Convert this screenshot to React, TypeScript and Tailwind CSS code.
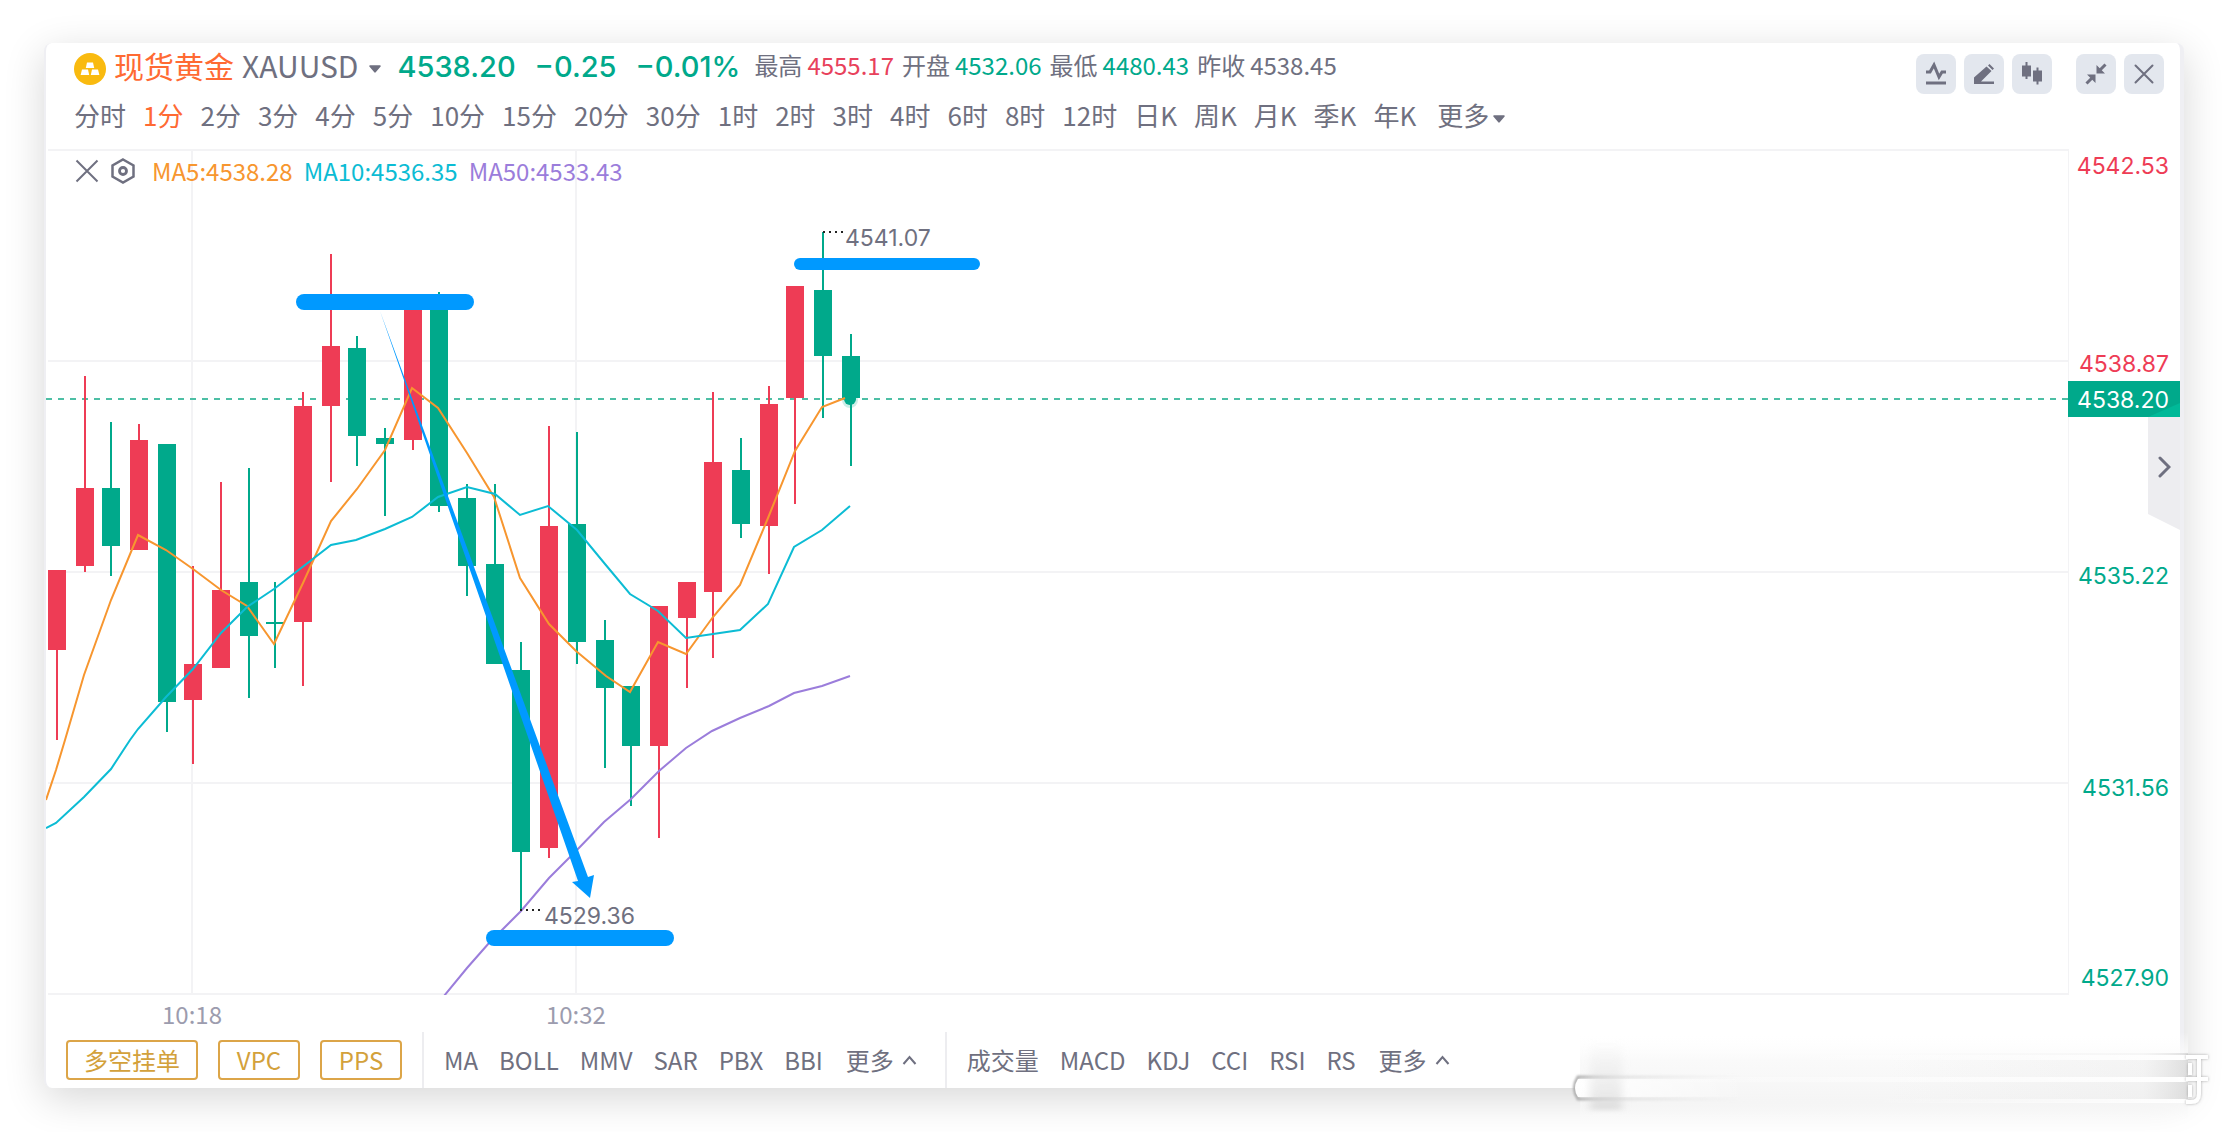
import type { ReactNode } from 'react'

const UP = '#ee3c55'
const DOWN = '#00a98b'

const periods = [
  '分时', '1分', '2分', '3分', '4分', '5分', '10分', '15分', '20分', '30分', '1时', '2时', '3时',
  '4时', '6时', '8时', '12时', '日K', '周K', '月K', '季K', '年K',
]

const stats = [
  { label: '最高', value: '4555.17', color: 'text-[#e8415b]' },
  { label: '开盘', value: '4532.06', color: 'text-[#00a98b]' },
  { label: '最低', value: '4480.43', color: 'text-[#00a98b]' },
  { label: '昨收', value: '4538.45', color: 'text-[#6f7080]' },
]

const orders = ['多空挂单', 'VPC', 'PPS']
const mainIndicators = ['MA', 'BOLL', 'MMV', 'SAR', 'PBX', 'BBI']
const subIndicators = ['成交量', 'MACD', 'KDJ', 'CCI', 'RSI', 'RS']

// x, body top, body bottom, wick top, wick bottom, rising
const candles: [number, number, number, number, number, boolean][] = [
  [2, 421, 501, 421, 591, true],
  [30, 339, 417, 227, 423, true],
  [56, 339, 397, 273, 427, false],
  [84, 291, 401, 275, 401, true],
  [112, 295, 553, 295, 583, false],
  [138, 515, 551, 417, 615, true],
  [166, 441, 519, 333, 519, true],
  [194, 433, 487, 319, 549, false],
  [220, 473, 475, 433, 519, false],
  [248, 257, 473, 243, 537, true],
  [276, 197, 257, 105, 333, true],
  [302, 199, 287, 187, 317, false],
  [330, 289, 295, 279, 367, false],
  [358, 155, 291, 155, 301, true],
  [384, 149, 357, 143, 363, false],
  [412, 349, 417, 335, 447, false],
  [440, 415, 515, 335, 515, false],
  [466, 521, 703, 493, 761, false],
  [494, 377, 699, 277, 709, true],
  [522, 375, 493, 283, 515, false],
  [550, 491, 539, 471, 619, false],
  [576, 537, 597, 537, 657, false],
  [604, 457, 597, 457, 689, true],
  [632, 433, 469, 433, 539, true],
  [658, 313, 443, 243, 509, true],
  [686, 321, 375, 289, 389, false],
  [714, 255, 377, 237, 425, true],
  [740, 137, 249, 137, 355, true],
  [768, 141, 207, 83, 269, false],
  [796, 207, 249, 185, 317, false],
]

const ma5 =
  '0,651 10,621 19,591 38,526 65,451 92,386 120,401 147,420 175,441 201,457 228,495 257,434 285,372 311,340 339,301 366,239 392,259 421,304 448,348 474,429 503,475 530,502 560,527 584,543 612,493 640,505 667,468 694,436 722,369 749,302 776,258 799,249'
const ma10 =
  '0,679 10,674 38,648 65,620 84,591 92,580 120,548 147,520 175,484 201,458 228,440 285,396 310,391 339,380 366,368 392,348 421,338 449,345 474,366 502,357 531,381 559,415 584,445 612,462 640,489 667,485 694,481 722,455 748,398 776,381 804,357'
const ma50 =
  '398,847 421,819 443,794 475,762 503,729 530,702 558,673 585,650 613,622 640,599 666,582 694,569 723,557 748,544 776,537 804,527'

const priceTicks = [
  { value: '4542.53', y: 25, color: UP },
  { value: '4538.87', y: 223, color: UP },
  { value: '4535.22', y: 435, color: DOWN },
  { value: '4531.56', y: 647, color: DOWN },
  { value: '4527.90', y: 837, color: DOWN },
]

function Caret() {
  return (
    <svg width="12" height="8" viewBox="0 0 13 8" fill="currentColor" aria-hidden="true">
      <path d="M1 0h11a.8.8 0 0 1 .6 1.300L7.300 7.500a1 1 0 0 1-1.600 0L.4 1.300A.8.8 0 0 1 1 0z" />
    </svg>
  )
}

function ToolButton({ label, children }: { label: string; children: ReactNode }) {
  return (
    <button
      type="button"
      aria-label={label}
      className="flex size-10 items-center justify-center rounded-lg bg-[#e3e7ee] text-[#6f7080]"
    >
      <svg width="40" height="40" viewBox="0 0 40 40" fill="none" stroke="currentColor">
        {children}
      </svg>
    </button>
  )
}

function Header() {
  return (
    <header className="flex h-[106px] items-start justify-between pr-4 pl-7">
      <div>
        <div className="flex h-12 items-center pb-1 whitespace-nowrap">
          <svg width="32" height="32" viewBox="0 0 32 32" className="mt-2 mr-2 shrink-0" aria-hidden="true">
            <circle cx="16" cy="16" r="16" fill="#f9ba0f" />
            <g fill="#fff">
              <path d="M13 9.5h6l1.200 5.500h-8.400z" />
              <path d="M8 16.500h6l1.200 5.500H6.600z" />
              <path d="M18 16.500h6l1.400 5.500h-8.600z" />
            </g>
          </svg>
          <h1 className="text-[30px] text-[#ff6a33]">现货黄金</h1>
          <button type="button" className="ml-2 flex items-center gap-[11px] text-[30px]">
            XAUUSD
            <span className="mt-2">
              <Caret />
            </span>
          </button>
          <div className="mt-1 ml-4 flex gap-[19px] font-['Inter','Liberation_Sans',sans-serif] text-[29px] font-medium text-[#00a98b]">
            <span>4538.20</span>
            <span>−0.25</span>
            <span>−0.01%</span>
          </div>
          <dl className="ml-[14px] flex gap-2">
            {stats.map((s) => (
              <div key={s.label} className="flex gap-[5px]">
                <dt>{s.label}</dt>
                <dd className={s.color}>{s.value}</dd>
              </div>
            ))}
          </dl>
        </div>
        <nav className="flex h-12 items-center gap-[17px] text-[26px] whitespace-nowrap">
          {periods.map((p) => (
            <button key={p} type="button" className={p === '1分' ? 'text-[#ff6a33]' : ''}>
              {p}
            </button>
          ))}
          <button type="button" className="ml-1 flex items-center gap-1">
            更多
            <span className="mt-2">
              <Caret />
            </span>
          </button>
        </nav>
      </div>
      <div className="mt-[11px] flex gap-2">
        <ToolButton label="指标">
          <path d="M10 18h4l4-7 5 12 3-5h4" strokeWidth="3" />
          <path d="M10 29h20" strokeWidth="3" />
        </ToolButton>
        <ToolButton label="画线">
          <path
            d="M10 28v-4.500L22.500 12.500l5 4.500L17 27.500h13V30H10zM24 11.500l1.500-1.500 4.500 4.500-1.500 1.500z"
            fill="currentColor"
            stroke="none"
          />
        </ToolButton>
        <ToolButton label="K线">
          <path d="M14.500 8v17M25.500 13.500v17" strokeWidth="2" />
          <path d="M10 11.500h9v11h-9zM21 16.500h9v11h-9z" fill="currentColor" stroke="none" />
        </ToolButton>
        <div className="ml-4 flex gap-2">
          <ToolButton label="缩小">
            <path d="M29.500 10.500l-6 6M10.500 29.500l6-6" strokeWidth="3" />
            <path d="M20.500 11v8.500H29zM11 20.500h8.500V29z" fill="currentColor" stroke="none" />
          </ToolButton>
          <ToolButton label="关闭">
            <path d="M11.500 11.500l17 17M28.500 11.500l-17 17" strokeWidth="2" strokeLinecap="round" />
          </ToolButton>
        </div>
      </div>
    </header>
  )
}

function Chart() {
  return (
    <svg
      width="100%"
      height="846"
      className="block font-['Inter','Liberation_Sans',sans-serif] text-[23px]"
      role="img"
      aria-label="XAUUSD 1分"
    >
      <g stroke="#f3f3f5" strokeWidth="2">
        {[1, 212, 423, 634, 845].map((y) => (
          <line key={y} x1="2" x2="100%" y1={y} y2={y} />
        ))}
        <line x1="146" x2="146" y1="2" y2="845" />
        <line x1="530" x2="530" y1="2" y2="845" />
      </g>
      <line x1="0" x2="100%" y1="250" y2="250" stroke="#4dbfa5" strokeWidth="2" strokeDasharray="6 6" />
      {candles.map(([x, top, bottom, high, low, rising]) => (
        <g key={x} fill={rising ? UP : DOWN}>
          <rect x={x + 8} y={high} width="2" height={low - high} />
          <rect x={x} y={top} width="18" height={bottom - top} />
        </g>
      ))}
      <circle cx="804" cy="251" r="8" fill={DOWN} opacity="0.2" />
      <circle cx="804" cy="250" r="6" fill={DOWN} />
      <g fill="none" strokeWidth="2">
        <polyline points={ma5} stroke="#f7962f" />
        <polyline points={ma10} stroke="#0cbcd4" />
        <polyline points={ma50} stroke="#9b7ddb" />
      </g>
      <g stroke="#222" strokeWidth="2" strokeDasharray="2 4">
        <line x1="777" x2="798" y1="83" y2="83" />
        <line x1="474" x2="495" y1="761" y2="761" />
      </g>
      <text x="799" y="97" fill="#6f7080">4541.07</text>
      <text x="498" y="775" fill="#6f7080">4529.36</text>
      <g fill="#0099ff">
        <rect x="250" y="145" width="178" height="16" rx="8" />
        <rect x="748" y="109" width="186" height="12" rx="6" />
        <rect x="440" y="781" width="188" height="16" rx="8" />
        <path d="M334 162L542 728L548 726L544 749L526 733L532 732z" />
      </g>
    </svg>
  )
}

function PriceAxis() {
  return (
    <div className="relative w-28 shrink-0">
      <button
        type="button"
        aria-label="展开"
        className="absolute top-[254px] right-0 flex h-[127px] w-8 items-center justify-center bg-[#ededf0] text-[#6f7080] [clip-path:polygon(0_14px,100%_0,100%_100%,0_111px)]"
      >
        <svg width="14" height="22" viewBox="0 0 14 22" fill="none" stroke="currentColor" strokeWidth="3">
          <path d="M3 2l9 9-9 9" strokeLinecap="round" />
        </svg>
      </button>
      <svg
        width="112"
        height="846"
        className="pointer-events-none relative block font-['Inter','Liberation_Sans',sans-serif] text-[23px]"
      >
        <line x1="0" x2="0" y1="0" y2="846" stroke="#f3f3f5" strokeWidth="2" />
        {priceTicks.map((t) => (
          <text key={t.value} x="101" y={t.y} textAnchor="end" fill={t.color}>
            {t.value}
          </text>
        ))}
        <rect x="0" y="232" width="112" height="36" fill={DOWN} />
        <path d="M80 268l32-14v14z" fill="#00b998" />
        <text x="101" y="259" textAnchor="end" fill="#fff">4538.20</text>
      </svg>
    </div>
  )
}

function Legend() {
  return (
    <div className="absolute top-1 left-[29px] flex h-9 items-center gap-[11px] whitespace-nowrap">
      <button type="button" aria-label="关闭指标">
        <svg width="24" height="24" viewBox="0 0 24 24" stroke="#6f7080" strokeWidth="2">
          <path d="M1.500 1.500l21 21M22.500 1.500l-21 21" />
        </svg>
      </button>
      <button type="button" aria-label="指标设置">
        <svg width="26" height="26" viewBox="0 0 26 26" fill="none" stroke="#6f7080">
          <path d="M13 1.500l10.500 6v11l-10.500 6-10.500-6v-11z" strokeWidth="2.500" />
          <circle cx="13" cy="13" r="3.500" strokeWidth="2.800" />
        </svg>
      </button>
      <span className="ml-[5px] text-[#f7962f]">MA5:4538.28</span>
      <span className="text-[#0cbcd4]">MA10:4536.35</span>
      <span className="text-[#9b7ddb]">MA50:4533.43</span>
    </div>
  )
}

function IndicatorGroup({ items }: { items: string[] }) {
  return (
    <div className="flex items-center gap-[21px] border-l-2 border-[#ededf0] pr-7 pl-5">
      {items.map((item) => (
        <button key={item} type="button">
          {item}
        </button>
      ))}
      <button type="button" className="ml-0.5 flex items-center gap-2">
        更多
        <svg width="15" height="10" viewBox="0 0 15 10" fill="none" stroke="currentColor" strokeWidth="2">
          <path d="M1.500 9l6-7 6 7" />
        </svg>
      </button>
    </div>
  )
}

function Watermark() {
  return (
    <div className="pointer-events-none absolute right-3 bottom-2 h-24 w-[648px]" aria-hidden="true">
      <svg width="648" height="96" viewBox="0 0 648 96">
        <defs>
          <linearGradient id="haze" x1="0" x2="0" y1="0" y2="1">
            <stop offset="0" stopColor="#fff" stopOpacity="0" />
            <stop offset="0.300" stopColor="#fafafa" />
            <stop offset="0.750" stopColor="#f5f5f5" />
            <stop offset="1" stopColor="#fdfdfd" stopOpacity="0" />
          </linearGradient>
          <linearGradient id="smear" x1="0" x2="0" y1="0" y2="1">
            <stop offset="0" stopColor="#ddd" stopOpacity="0" />
            <stop offset="0.500" stopColor="#ddd" stopOpacity="0.600" />
            <stop offset="1" stopColor="#cfcfcf" />
          </linearGradient>
          <linearGradient id="tube" x1="0" x2="1" y1="0" y2="0">
            <stop offset="0" stopColor="#fff" />
            <stop offset="1" stopColor="#fff" stopOpacity="0" />
          </linearGradient>
          <linearGradient id="rim" x1="0" x2="1" y1="0" y2="0">
            <stop offset="0" stopColor="#aaa" />
            <stop offset="0.250" stopColor="#ccc" stopOpacity="0.500" />
            <stop offset="1" stopColor="#ddd" stopOpacity="0" />
          </linearGradient>
          <linearGradient id="streak" x1="0" x2="1" y1="0" y2="0">
            <stop offset="0" stopColor="#fff" stopOpacity="0" />
            <stop offset="1" stopColor="#fff" />
          </linearGradient>
          <linearGradient id="shade" x1="0" x2="1" y1="0" y2="0">
            <stop offset="0" stopColor="#ddd" stopOpacity="0" />
            <stop offset="0.850" stopColor="#ddd" stopOpacity="0.200" />
            <stop offset="1" stopColor="#ccc" stopOpacity="0.600" />
          </linearGradient>
          <filter id="soft" x="-50%" y="-50%" width="200%" height="200%">
            <feGaussianBlur stdDeviation="4 2" />
          </filter>
          <filter id="rimSoft" x="-10%" y="-40%" width="120%" height="180%">
            <feGaussianBlur stdDeviation="1.200" />
          </filter>
          <filter id="edge" x="-20%" y="-20%" width="140%" height="140%">
            <feDropShadow dx="0" dy="0" stdDeviation="1.500" floodColor="#777" floodOpacity="0.600" />
          </filter>
        </defs>
        <rect x="12" y="4" width="608" height="92" fill="url(#haze)" />
        <path d="M180 49H10q-7 11 0 22h170" fill="none" stroke="url(#rim)" strokeWidth="3" filter="url(#rimSoft)" />
        <path d="M180 51H10q-6 9 0 18h170z" fill="url(#tube)" />
        <rect x="22" y="12" width="32" height="70" fill="url(#smear)" opacity="0.600" filter="url(#soft)" />
        <g fill="url(#shade)">
          <rect x="320" y="25" width="300" height="27" />
          <rect x="320" y="52" width="300" height="22" />
        </g>
        <g fill="url(#streak)">
          <rect x="200" y="27" width="420" height="5" />
          <rect x="60" y="49" width="560" height="5" />
          <rect x="300" y="71" width="320" height="4" />
        </g>
        <path
          d="M618 29h22M618 51h22M631 29v37q0 8-8 8h-5M622 35v12M622 57v12"
          fill="none"
          stroke="#fff"
          strokeWidth="4"
          filter="url(#edge)"
        />
      </svg>
    </div>
  )
}

export default function App() {
  return (
    <div className="relative min-h-screen overflow-hidden bg-white px-11 pt-[43px] pb-11 font-['Noto_Sans_CJK_SC',sans-serif] text-2xl text-[#6f7080]">
      <main className="rounded-lg border-r-4 border-l-2 border-[#efeff3] bg-white shadow-[0_10px_40px_rgba(0,0,0,0.16)]">
        <Header />
        <section className="flex">
          <div className="relative min-w-0 flex-1">
            <Chart />
            <Legend />
          </div>
          <PriceAxis />
        </section>
        <div className="flex h-[37px] items-center gap-[324px] pl-[116px] text-[#9c9cae]">
          <span>10:18</span>
          <span>10:32</span>
        </div>
        <footer className="flex h-14 whitespace-nowrap">
          <div className="flex items-center gap-5 px-5">
            {orders.map((o) => (
              <button
                key={o}
                type="button"
                className="h-10 min-w-[82px] rounded border-2 border-[#dca548] px-4 leading-9 text-[#d3a13b]"
              >
                {o}
              </button>
            ))}
          </div>
          <IndicatorGroup items={mainIndicators} />
          <IndicatorGroup items={subIndicators} />
        </footer>
      </main>
      <Watermark />
    </div>
  )
}
